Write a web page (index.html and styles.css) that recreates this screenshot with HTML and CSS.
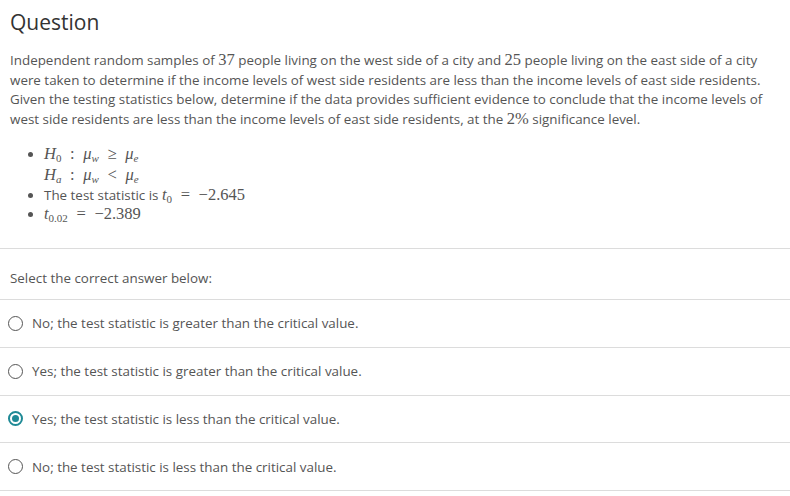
FILE: index.html
```html
<!DOCTYPE html>
<html>
<head>
<meta charset="utf-8">
<link rel="stylesheet" href="styles.css">
</head>
<body>
<div class="page">
  <div class="question">
    <h1 class="title">Question</h1>
    <p class="stem">Independent random samples of <span class="m">37</span> people living on the west side of a city and <span class="m">25</span> people living on the east side of a city were taken to determine if the income levels of west side residents are less than the income levels of east side residents. Given the testing statistics below, determine if the data provides sufficient evidence to conclude that the income levels of west side residents are less than the income levels of east side residents, at the <span class="m">2%</span> significance level.</p>
    <ul class="list">
      <li><div class="mline"><span class="m"><i>H</i><sub>0</sub> <span class="op">:</span> <i>μ</i><sub><i>w</i></sub> <span class="op">≥</span> <i>μ</i><sub><i>e</i></sub></span></div><div class="mline"><span class="m"><i>H</i><sub><i>a</i></sub> <span class="op">:</span> <i>μ</i><sub><i>w</i></sub> <span class="op">&lt;</span> <i>μ</i><sub><i>e</i></sub></span></div></li>
      <li>The test statistic is <span class="m"><i>t</i><sub>0</sub> <span class="op">=</span> −2.645</span></li>
      <li><span class="m"><i>t</i><sub>0.02</sub> <span class="op">=</span> −2.389</span></li>
    </ul>
  </div>
  <div class="prompt">Select the correct answer below:</div>
  <div class="options">
    <div class="option"><span class="radio"></span><span>No; the test statistic is greater than the critical value.</span></div>
    <div class="option"><span class="radio"></span><span>Yes; the test statistic is greater than the critical value.</span></div>
    <div class="option"><span class="radio checked"></span><span>Yes; the test statistic is less than the critical value.</span></div>
    <div class="option"><span class="radio"></span><span>No; the test statistic is less than the critical value.</span></div>
  </div>
</div>
</body>
</html>
```

FILE: styles.css
```css
html, body {
  margin: 0;
  padding: 0;
  background: #fff;
}
body {
  font-family: "Open Sans", "Noto Sans", sans-serif;
  color: #555;
  font-size: 13.4px;
}
.question {
  padding: 0 10px 24px;
  border-bottom: 1px solid #dcdcdc;
}
.title {
  margin: 0;
  padding-top: 7px;
  font-size: 21px;
  font-weight: 400;
  color: #333;
  line-height: 30px;
}
.stem {
  margin: 14px 0 0;
  line-height: 19.5px;
}
.m {
  font-family: "Liberation Serif", "DejaVu Serif", serif;
  font-size: 16.5px;
  line-height: 1;
  color: #555;
  white-space: nowrap;
}
.m sub {
  font-size: 11px;
  vertical-align: -3px;
  line-height: 0;
}
.op {
  padding: 0 4.5px;
}
.list {
  margin: 16px 0 0;
  padding-left: 34px;
  line-height: 19px;
}
.mline {
  height: 20.5px;
  line-height: 19px;
}
.list li::marker {
  font-size: 13px;
}
.prompt {
  padding: 0 10px;
  height: 50px;
  line-height: 58px;
  border-bottom: 1px solid #dcdcdc;
}
.option {
  display: flex;
  align-items: center;
  gap: 9px;
  padding: 0 8px;
  height: 46.8px;
  border-bottom: 1px solid #dcdcdc;
}
.radio {
  box-sizing: border-box;
  width: 15px;
  height: 15px;
  border: 1.5px solid #555;
  border-radius: 50%;
  flex: none;
  display: flex;
  align-items: center;
  justify-content: center;
}
.radio.checked {
  border: 2px solid #1f8a96;
}
.radio.checked::after {
  content: "";
  width: 7px;
  height: 7px;
  border-radius: 50%;
  background: #1f8a96;
}
```
